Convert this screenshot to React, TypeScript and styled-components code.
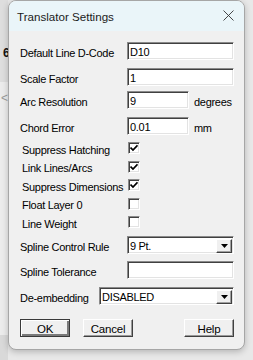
import React from "react";
import styled, { createGlobalStyle } from "styled-components";

const GlobalStyle = createGlobalStyle`
  html, body {
    margin: 0;
    padding: 0;
    width: 253px;
    height: 360px;
    overflow: hidden;
    background: #e7e7e7;
  }
`;

const Screen = styled.div`
  display: flex;
  width: 253px;
  height: 360px;
  background: #e8e8e8;
  font-family: "Liberation Sans", Arial, sans-serif;
`;

const Backdrop = styled.div`
  width: 8px;
  flex: none;
  display: flex;
  flex-direction: column;
  background: linear-gradient(#dedede 0 82px, #ececec 82px 335px, #d9d9d9 335px);
`;

const Peek = styled.span<{ $top: number; $muted?: boolean }>`
  margin-top: ${(p) => p.$top}px;
  margin-left: ${(p) => (p.$muted ? 1 : 3)}px;
  font-size: 12px;
  line-height: 12px;
  font-weight: ${(p) => (p.$muted ? 400 : 700)};
  color: ${(p) => (p.$muted ? "#9a9a9a" : "#111")};
`;

const Dialog = styled.div`
  width: 237px;
  height: 350px;
  flex: none;
  box-sizing: border-box;
  border: 1px solid #a6a6a6;
  border-radius: 8px;
  background: #f0f0f0;
  box-shadow: 0 2px 6px rgba(0, 0, 0, 0.22);
  overflow: hidden;
  display: flex;
  flex-direction: column;
`;

const TitleBar = styled.div`
  height: 30px;
  flex: none;
  display: flex;
  align-items: center;
  justify-content: space-between;
  padding: 0 10px 0 8px;
  background: #eaf5f9;
  font-size: 11.6px;
  color: #1b1b1b;
`;

const Close = styled.svg`
  width: 11px;
  height: 11px;
  margin-top: -1px;
`;

const Body = styled.div`
  display: flex;
  flex-direction: column;
  padding: 0 10px 0 11px;
  font-size: 11px;
  letter-spacing: -0.3px;
  color: #000;
`;

const Row = styled.div<{ $gap: number; $h?: number }>`
  display: flex;
  align-items: center;
  height: ${(p) => p.$h ?? 18}px;
  margin-top: ${(p) => p.$gap}px;
`;

const Label = styled.span<{ $w: number; $indent?: number }>`
  width: ${(p) => p.$w - (p.$indent ?? 0)}px;
  padding-left: ${(p) => p.$indent ?? 0}px;
  padding-top: 3px;
  flex: none;
  white-space: nowrap;
`;

const Sunken = styled.div<{ $w: number }>`
  width: ${(p) => p.$w}px;
  height: 18px;
  box-sizing: border-box;
  flex: none;
  display: flex;
  align-items: center;
  padding-left: 2px;
  background: #fff;
  border: 1px solid;
  border-color: #8a8a8a #ffffff #ffffff #8a8a8a;
  box-shadow: inset 1px 1px #404040, inset -1px -1px #e3e3e3;
  padding-top: 1px;
`;

const Unit = styled.span`
  margin-left: 5px;
  padding-top: 3px;
`;

const Box = styled.div`
  width: 12px;
  height: 12px;
  box-sizing: border-box;
  flex: none;
  background: #fff;
  border: 1px solid;
  border-color: #8a8a8a #ffffff #ffffff #8a8a8a;
  box-shadow: inset 1px 1px #404040, inset -1px -1px #e3e3e3;
  display: flex;
  align-items: center;
  justify-content: center;
`;

const DropBtn = styled.div`
  margin-left: auto;
  margin-right: 1px;
  width: 16px;
  height: 14px;
  box-sizing: border-box;
  background: #f0f0f0;
  border: 1px solid;
  border-color: #ffffff #404040 #404040 #ffffff;
  box-shadow: inset -1px -1px #a0a0a0;
  display: flex;
  align-items: center;
  justify-content: center;
`;

const Buttons = styled.div`
  display: flex;
  margin-top: 14px;
  height: 18px;
`;

const Btn = styled.button<{ $default?: boolean; $push?: boolean }>`
  width: 50px;
  height: 18px;
  box-sizing: border-box;
  margin-left: ${(p) => (p.$push ? "auto" : "0")};
  margin-right: 13px;
  padding: 1px 0 0;
  font-family: "Liberation Sans", Arial, sans-serif;
  font-size: 11.5px;
  letter-spacing: -0.2px;
  color: #000;
  background: #f0f0f0;
  border: 1px solid;
  border-color: ${(p) =>
    p.$default ? "#3a3a3a" : "#ffffff #404040 #404040 #ffffff"};
  box-shadow: ${(p) =>
    p.$default
      ? "inset 1px 1px #ffffff, inset -2px -2px #7a7a7a"
      : "inset -1px -1px #9a9a9a"};
  &:last-child {
    margin-right: 0;
  }
`;

const Check = () => (
  <svg width="8" height="8" viewBox="0 0 8 8">
    <path d="M0.5 3.5 L3 6 L7.5 1.3" fill="none" stroke="#000" strokeWidth="1.7" />
  </svg>
);

const Arrow = () => (
  <svg width="7" height="4" viewBox="0 0 7 4">
    <path d="M0 0 H7 L3.5 4 Z" fill="#000" />
  </svg>
);

const checks: [string, boolean][] = [
  ["Suppress Hatching", true],
  ["Link Lines/Arcs", true],
  ["Suppress Dimensions", true],
  ["Float Layer 0", false],
  ["Line Weight", false],
];

export default function App() {
  return (
    <>
      <GlobalStyle />
      <Screen>
        <Backdrop>
          <Peek $top={47}>6</Peek>
          <Peek $top={33} $muted>
            &lt;
          </Peek>
        </Backdrop>
        <Dialog>
          <TitleBar>
            <span>Translator Settings</span>
            <Close viewBox="0 0 11 11">
              <path d="M0.5 0.5 L10.5 10.5 M10.5 0.5 L0.5 10.5" stroke="#333" strokeWidth="0.9" />
            </Close>
          </TitleBar>
          <Body>
            <Row $gap={11}>
              <Label $w={107}>Default Line D-Code</Label>
              <Sunken $w={107}>D10</Sunken>
            </Row>
            <Row $gap={8}>
              <Label $w={107}>Scale Factor</Label>
              <Sunken $w={107}>1</Sunken>
            </Row>
            <Row $gap={5}>
              <Label $w={107}>Arc Resolution</Label>
              <Sunken $w={62}>9</Sunken>
              <Unit>degrees</Unit>
            </Row>
            <Row $gap={8}>
              <Label $w={107}>Chord Error</Label>
              <Sunken $w={62}>0.01</Sunken>
              <Unit>mm</Unit>
            </Row>
            {checks.map(([text, on], i) => (
              <Row key={text} $gap={i === 0 ? 4 : 0} $h={18.5}>
                <Label $w={108} $indent={2}>
                  {text}
                </Label>
                <Box>{on && <Check />}</Box>
              </Row>
            ))}
            <Row $gap={4.5}>
              <Label $w={107}>Spline Control Rule</Label>
              <Sunken $w={107}>
                9 Pt.
                <DropBtn>
                  <Arrow />
                </DropBtn>
              </Sunken>
            </Row>
            <Row $gap={7}>
              <Label $w={107}>Spline Tolerance</Label>
              <Sunken $w={107} />
            </Row>
            <Row $gap={8}>
              <Label $w={79}>De-embedding</Label>
              <Sunken $w={135}>
                DISABLED
                <DropBtn>
                  <Arrow />
                </DropBtn>
              </Sunken>
            </Row>
            <Buttons>
              <Btn $default>OK</Btn>
              <Btn>Cancel</Btn>
              <Btn $push>Help</Btn>
            </Buttons>
          </Body>
        </Dialog>
      </Screen>
    </>
  );
}
